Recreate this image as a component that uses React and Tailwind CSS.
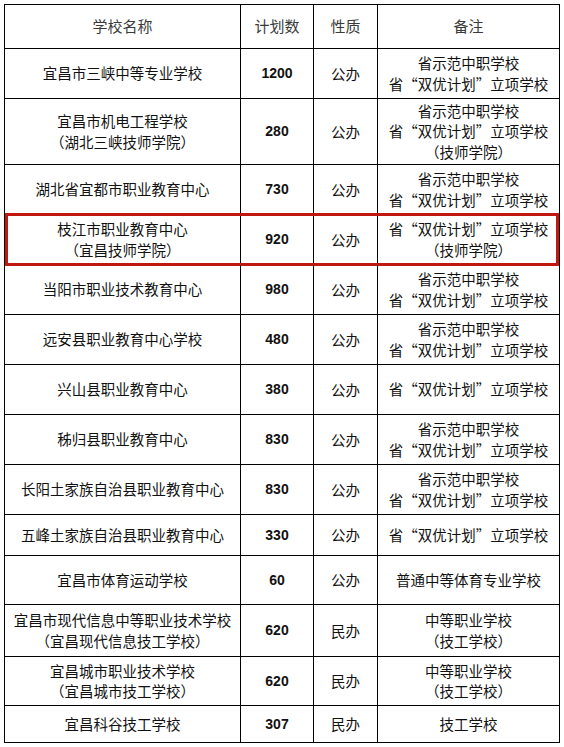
import React from "react";

// 学校招生计划表 — grid table, widths taken from the reference lines
const rows = [
  { name: ["宜昌市三峡中等专业学校"], n: "1200", kind: "公办", note: ["省示范中职学校", "省“双优计划”立项学校"], h: "h-[50px]" },
  { name: ["宜昌市机电工程学校", "（湖北三峡技师学院）"], n: "280", kind: "公办", note: ["省示范中职学校", "省“双优计划”立项学校", "（技师学院）"], h: "h-[66px]" },
  { name: ["湖北省宜都市职业教育中心"], n: "730", kind: "公办", note: ["省示范中职学校", "省“双优计划”立项学校"], h: "h-[50px]" },
  { name: ["枝江市职业教育中心", "（宜昌技师学院）"], n: "920", kind: "公办", note: ["省“双优计划”立项学校", "（技师学院）"], h: "h-[50px]", mark: true },
  { name: ["当阳市职业技术教育中心"], n: "980", kind: "公办", note: ["省示范中职学校", "省“双优计划”立项学校"], h: "h-[50px]" },
  { name: ["远安县职业教育中心学校"], n: "480", kind: "公办", note: ["省示范中职学校", "省“双优计划”立项学校"], h: "h-[50px]" },
  { name: ["兴山县职业教育中心"], n: "380", kind: "公办", note: ["省“双优计划”立项学校"], h: "h-[50px]" },
  { name: ["秭归县职业教育中心"], n: "830", kind: "公办", note: ["省示范中职学校", "省“双优计划”立项学校"], h: "h-[50px]" },
  { name: ["长阳土家族自治县职业教育中心"], n: "830", kind: "公办", note: ["省示范中职学校", "省“双优计划”立项学校"], h: "h-[50px]" },
  { name: ["五峰土家族自治县职业教育中心"], n: "330", kind: "公办", note: ["省“双优计划”立项学校"], h: "h-[41px]" },
  { name: ["宜昌市体育运动学校"], n: "60", kind: "公办", note: ["普通中等体育专业学校"], h: "h-[49px]" },
  { name: ["宜昌市现代信息中等职业技术学校", "（宜昌现代信息技工学校）"], n: "620", kind: "民办", note: ["中等职业学校", "（技工学校）"], h: "h-[52px]" },
  { name: ["宜昌城市职业技术学校", "（宜昌城市技工学校）"], n: "620", kind: "民办", note: ["中等职业学校", "（技工学校）"], h: "h-[49px]" },
  { name: ["宜昌科谷技工学校"], n: "307", kind: "民办", note: ["技工学校"], h: "h-[37px]" },
];

const cell = "flex flex-col items-center justify-center text-center border-r border-b border-black";

function Lines({ items }) {
  return items.map((t, i) => (
    <span key={i} className="block leading-[20.5px] whitespace-nowrap">{t}</span>
  ));
}

export default function App() {
  return (
    <div
      className="bg-white w-[564px] h-[747px] pt-[4px] pl-[4px] text-[#111] text-[14.5px]"
      style={{ fontFamily: '"Noto Sans CJK SC", "Liberation Sans", sans-serif' }}
    >
      <div className="w-[556px] border-l border-t border-black">
        {/* header */}
        <div className="grid grid-cols-[236px_73px_64px_182px] h-[44px] text-[#3a3a3a] text-[15px]">
          <div className={cell}>学校名称</div>
          <div className={cell}>计划数</div>
          <div className={cell}>性质</div>
          <div className={cell}>备注</div>
        </div>

        {rows.map((r, i) => (
          <div key={i} className={`relative grid grid-cols-[236px_73px_64px_182px] ${r.h}`}>
            <div className={cell}><Lines items={r.name} /></div>
            <div className={`${cell} font-bold text-[14px]`} style={{ fontFamily: '"Liberation Sans", Arial, sans-serif' }}>
              {r.n}
            </div>
            <div className={cell}>{r.kind}</div>
            <div className={cell}><Lines items={r.note} /></div>
            {r.mark && (
              <div className="absolute -top-[2px] left-0 w-[554px] h-[53px] border-[3px] border-[#c0180f] pointer-events-none" />
            )}
          </div>
        ))}
      </div>
    </div>
  );
}
